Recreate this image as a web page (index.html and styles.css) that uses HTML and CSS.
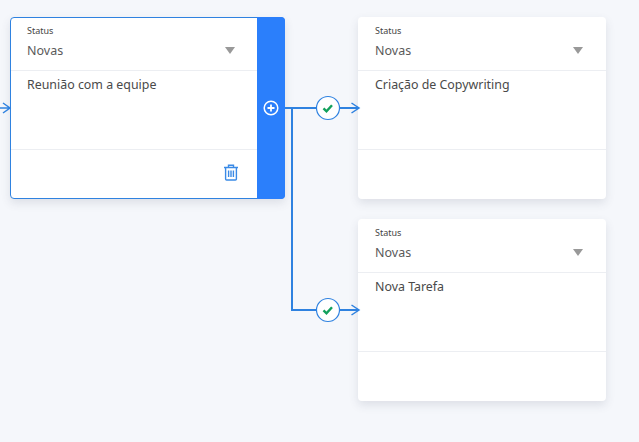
FILE: index.html
```
<!DOCTYPE html>
<html lang="pt">
<head>
<meta charset="utf-8">
<title>Fluxo de tarefas</title>
<link rel="stylesheet" href="styles.css">
</head>
<body>
<main class="canvas">
  <svg class="wires" width="639" height="442" viewBox="0 0 639 442" fill="none">
    <g stroke="#2f82e0" stroke-width="2">
      <path d="M0 108H10M3 103l7 5-7 5" stroke-width="1.500"/>
      <path d="M285 108H358M292 108V310H358"/>
      <path d="M351.500 103l7.500 5-7.500 5M351.500 305l7.500 5-7.500 5" stroke-width="1.500"/>
    </g>
    <g>
      <circle cx="328" cy="108" r="11.500" fill="#fff" stroke="#2f82e0" stroke-width="1.200"/>
      <path d="M323.500 108.300l3 3 5.500-6" stroke="#12a05c" stroke-width="2.400"/>
      <circle cx="328" cy="310" r="11.500" fill="#fff" stroke="#2f82e0" stroke-width="1.200"/>
      <path d="M323.500 310.300l3 3 5.500-6" stroke="#12a05c" stroke-width="2.400"/>
    </g>
  </svg>

  <article class="node node-a selected">
    <div class="node-body">
      <div class="field">
        <span class="label">Status</span>
        <div class="select"><span>Novas</span><i class="caret"></i></div>
      </div>
      <p class="title">Reunião com a equipe</p>
      <div class="foot">
        <svg class="trash" width="16" height="17" viewBox="0 0 16 17" fill="none" stroke="#3a8ae6" stroke-width="1.400">
          <path d="M1 3.500H15M5.500 3.300V1.200H10.500V3.300M2.600 3.500V15a1 1 0 0 0 1 1H12.400a1 1 0 0 0 1-1V3.500M5.600 6.500V13M8 6.500V13M10.400 6.500V13"/>
        </svg>
      </div>
    </div>
    <div class="side">
      <svg width="16" height="16" viewBox="0 0 16 16" fill="none" stroke="#fff" stroke-width="1.500">
        <circle cx="8" cy="8" r="6.800"/>
        <path d="M8 4.500V11.500M4.500 8H11.500" stroke-width="1.800"/>
      </svg>
    </div>
  </article>

  <article class="node node-b">
    <div class="node-body">
      <div class="field">
        <span class="label">Status</span>
        <div class="select"><span>Novas</span><i class="caret"></i></div>
      </div>
      <p class="title">Criação de Copywriting</p>
      <div class="foot"></div>
    </div>
  </article>

  <article class="node node-c">
    <div class="node-body">
      <div class="field">
        <span class="label">Status</span>
        <div class="select"><span>Novas</span><i class="caret"></i></div>
      </div>
      <p class="title">Nova Tarefa</p>
      <div class="foot"></div>
    </div>
  </article>
</main>
</body>
</html>
```

FILE: styles.css
```
* { box-sizing: border-box; }

html, body {
  margin: 0;
  height: 100%;
}

body {
  background: #f5f7fb;
  font-family: "Noto Sans", "Open Sans", sans-serif;
  color: #4a4a4a;
  overflow: hidden;
}

.canvas {
  position: relative;
  width: 639px;
  height: 442px;
}

.wires {
  position: absolute;
  left: 0;
  top: 0;
  z-index: 2;
}

.node {
  position: absolute;
  display: flex;
  height: 182px;
  background: #fff;
  border-radius: 4px;
  box-shadow: 0 4px 10px rgba(60, 70, 90, 0.13);
}

.node-a { left: 10px; top: 17px; width: 275px; border: 1px solid #2f82e0; }
.node-b { left: 358px; top: 17px; width: 248px; }
.node-c { left: 358px; top: 219px; width: 248px; }

.node-body {
  flex: 1;
  display: flex;
  flex-direction: column;
  min-width: 0;
}

.field {
  height: 54px;
  flex: none;
  padding: 7px 23px 0 17px;
  border-bottom: 1px solid #eceef2;
}

.selected .field { height: 53px; padding: 6px 22px 0 16px; }

.label {
  display: block;
  font-size: 9px;
  line-height: 13px;
  color: #444;
}

.select {
  display: flex;
  align-items: center;
  justify-content: space-between;
  margin-top: 4px;
  height: 18px;
  font-size: 12.500px;
  color: #5a5a5a;
}

.caret {
  width: 0;
  height: 0;
  border-left: 5.500px solid transparent;
  border-right: 5.500px solid transparent;
  border-top: 7px solid #999;
}

.title {
  flex: none;
  height: 79px;
  margin: 0;
  padding: 5px 17px 0;
  font-size: 12.400px;
  line-height: 18px;
  color: #4a4a4a;
  border-bottom: 1px solid #eceef2;
}

.selected .title { padding-left: 16px; }

.foot {
  flex: 1;
  display: flex;
  align-items: center;
  justify-content: flex-end;
  padding: 0 18px 4px 0;
}

.side {
  flex: none;
  width: 28px;
  margin: -1px -1px -1px 0;
  display: flex;
  align-items: center;
  justify-content: center;
  background: #2b7ffb;
  border-radius: 0 4px 4px 0;
}
```
